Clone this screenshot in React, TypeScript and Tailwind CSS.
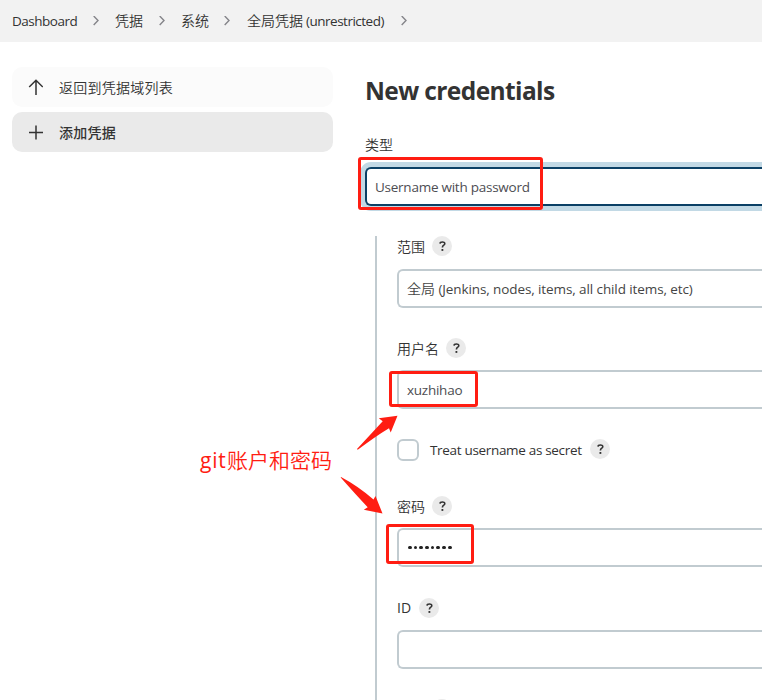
import type { ReactNode } from "react";

const field = "h-[39px] w-full rounded-l-[6px] border-2 border-r-0 border-[#c1cbd0] bg-white pl-2 flex items-center text-[13.5px] tracking-[-0.25px] text-[#4d4d52]";

function Chevron() {
  return (
    <svg className="h-[10px] w-[6px] shrink-0" viewBox="0 0 6 10" fill="none" stroke="#85858a" strokeWidth="1.4">
      <path d="M0.7 0L5 4.5L0.7 9" />
    </svg>
  );
}

function Zh({ children }: { children: ReactNode }) {
  return <span className="font-['Noto_Sans_CJK_SC',sans-serif] text-[14px] font-[350] tracking-normal">{children}</span>;
}

function Help() {
  return (
    <span className="flex size-5 shrink-0 items-center justify-center rounded-full bg-[#eaeaea] text-[#333]">
      <svg className="h-[10px] w-[7px]" viewBox="0 0 7 10" fill="none" stroke="currentColor" strokeWidth="1.6">
        <path d="M1 2.6C1.1 .5 5.8 .3 5.8 2.7C5.8 4.3 3.4 4.2 3.4 6.5" />
        <path d="M3.4 8V9.9" strokeWidth="1.8" />
      </svg>
    </span>
  );
}

function Label({ children }: { children: ReactNode }) {
  return (
    <div className="flex h-5 items-center gap-[7px] whitespace-nowrap leading-5">
      <span className="flex h-5 items-center pb-px">{children}</span>
      <Help />
    </div>
  );
}

export default function App() {
  return (
    <div className="relative h-[700px] w-[762px] overflow-hidden bg-white font-['Open_Sans','Noto_Sans_CJK_SC',sans-serif] text-[14px] text-[#333]">
      <header className="flex h-[42px] items-center bg-[#f2f2f2] pl-3 whitespace-nowrap leading-5">
        <span className="w-[65px] text-[13.5px] font-medium tracking-[-0.5px]">Dashboard</span>
        <span className="ml-4"><Chevron /></span>
        <span className="ml-4 w-7 pb-px"><Zh>凭据</Zh></span>
        <span className="ml-4"><Chevron /></span>
        <span className="ml-4 w-7 pb-px"><Zh>系统</Zh></span>
        <span className="ml-[15px]"><Chevron /></span>
        <span className="ml-[17px] w-[138px] pb-[2px] text-[13.5px] font-medium tracking-[-0.5px]"><Zh>全局凭据</Zh> (unrestricted)</span>
        <span className="ml-4"><Chevron /></span>
      </header>
      <main className="flex">
        <nav className="ml-3 flex w-[321px] shrink-0 flex-col gap-[5px] pt-[25px]">
          <a className="flex h-10 items-center gap-4 rounded-[10px] bg-[#fbfbfb] pl-4">
            <svg className="h-4 w-[15px]" viewBox="0 0 15 16" fill="none" stroke="#333" strokeWidth="1.5">
              <path d="M8 1V16M1.2 8L8 1.2L14.8 8" />
            </svg>
            <span className="font-['Noto_Sans_CJK_SC',sans-serif] font-[350] tracking-[0.25px]">返回到凭据域列表</span>
          </a>
          <a className="flex h-10 items-center gap-4 rounded-[10px] bg-[#eaeaea] pl-4">
            <svg className="h-4 w-[15px]" viewBox="0 0 15 16" fill="none" stroke="#333" strokeWidth="1.5">
              <path d="M8 1.5V15.5M1 8.5H15" />
            </svg>
            <span className="font-['Noto_Sans_CJK_SC',sans-serif] font-medium tracking-[0.25px]">添加凭据</span>
          </a>
        </nav>
        <section className="ml-8 min-w-0 flex-1 pt-[33px]">
          <h1 className="h-8 whitespace-nowrap text-[24.5px] leading-8 font-bold tracking-[-0.6px]">New credentials</h1>
          <div className="mt-[27px] flex h-5 items-center leading-5"><Zh>类型</Zh></div>
          <div className="mt-[13px] flex h-[39px] items-center rounded-l-[6px] border-2 border-r-0 border-[#0b4065] bg-white pt-px pl-2 text-[13.5px] tracking-[-0.25px] text-[#4d4d52] shadow-[0_0_0_5px_#c2d9e5]">Username with password</div>
          <div className="ml-[10px] mt-[30px] h-[500px] border-l-2 border-[#c1cbd0] pl-5">
            <Label><Zh>范围</Zh></Label>
            <div className={field + " mt-[13px]"}><span className="whitespace-nowrap tracking-[-0.1px] text-[#444]"><Zh>全局</Zh> (Jenkins, nodes, items, all child items, etc)</span></div>
            <div className="mt-[30px]"><Label><Zh>用户名</Zh></Label></div>
            <div className={field + " mt-3 pt-px"}>xuzhihao</div>
            <div className="mt-[30px] flex h-[22px] items-center">
              <span className="size-[22px] rounded-[6px] border-2 border-[#c1cbd0]" />
              <span className="ml-[11px] w-[152px] whitespace-nowrap pt-px text-[13.5px] font-medium tracking-[-0.32px]">Treat username as secret</span>
              <span className="ml-2 -mt-[2px]"><Help /></span>
            </div>
            <div className="mt-[35px]"><Label><Zh>密码</Zh></Label></div>
            <div className={field + " mt-3"}>
              <span className="flex gap-[2px] pl-[1px] text-[#222]">
                {Array.from({ length: 8 }, (_, i) => <span key={i} className="size-[3.7px] rounded-full bg-current" />)}
              </span>
            </div>
            <div className="mt-[31px]"><Label><span className="inline-block w-[15px] text-[14px] font-medium">ID</span></Label></div>
            <div className={field + " mt-3"} />
            <div className="mt-[30px] pl-[35px]"><Help /></div>
          </div>
        </section>
      </main>
      <div className="absolute top-[157px] left-[358px] h-[53px] w-[185px] rounded-[3px] border-3 border-[#ff1d12]" />
      <div className="absolute top-[371px] left-[389px] h-9 w-[89px] rounded-[3px] border-3 border-[#ff1d12]" />
      <div className="absolute top-[524px] left-[386px] h-10 w-[88px] rounded-[3px] border-3 border-[#ff1d12]" />
      <div className="absolute top-[444px] left-[200px] flex items-baseline whitespace-nowrap leading-[30px] text-[#ff1d12]">
        <span className="w-[27px] text-[21px] tracking-[0.8px]">git</span>
        <span className="font-['Noto_Sans_CJK_SC',sans-serif] text-[21px] font-[350]">账户和密码</span>
      </div>
      <svg className="absolute top-[410px] left-[335px] h-[110px] w-[70px]" viewBox="335 410 70 110" fill="#ff1d12">
        <path d="M357 449L382.7 421.3L378.8 418.3L397.5 415.7L390.7 432.5L389 428.2Q376 436 357.7 449.8Z" />
        <path d="M341 477Q358 486 373.5 499.5L375.5 496L382.5 513.5L363.8 509.8L367.7 507.3Q356 495 340.7 477.6Z" />
      </svg>
    </div>
  );
}
